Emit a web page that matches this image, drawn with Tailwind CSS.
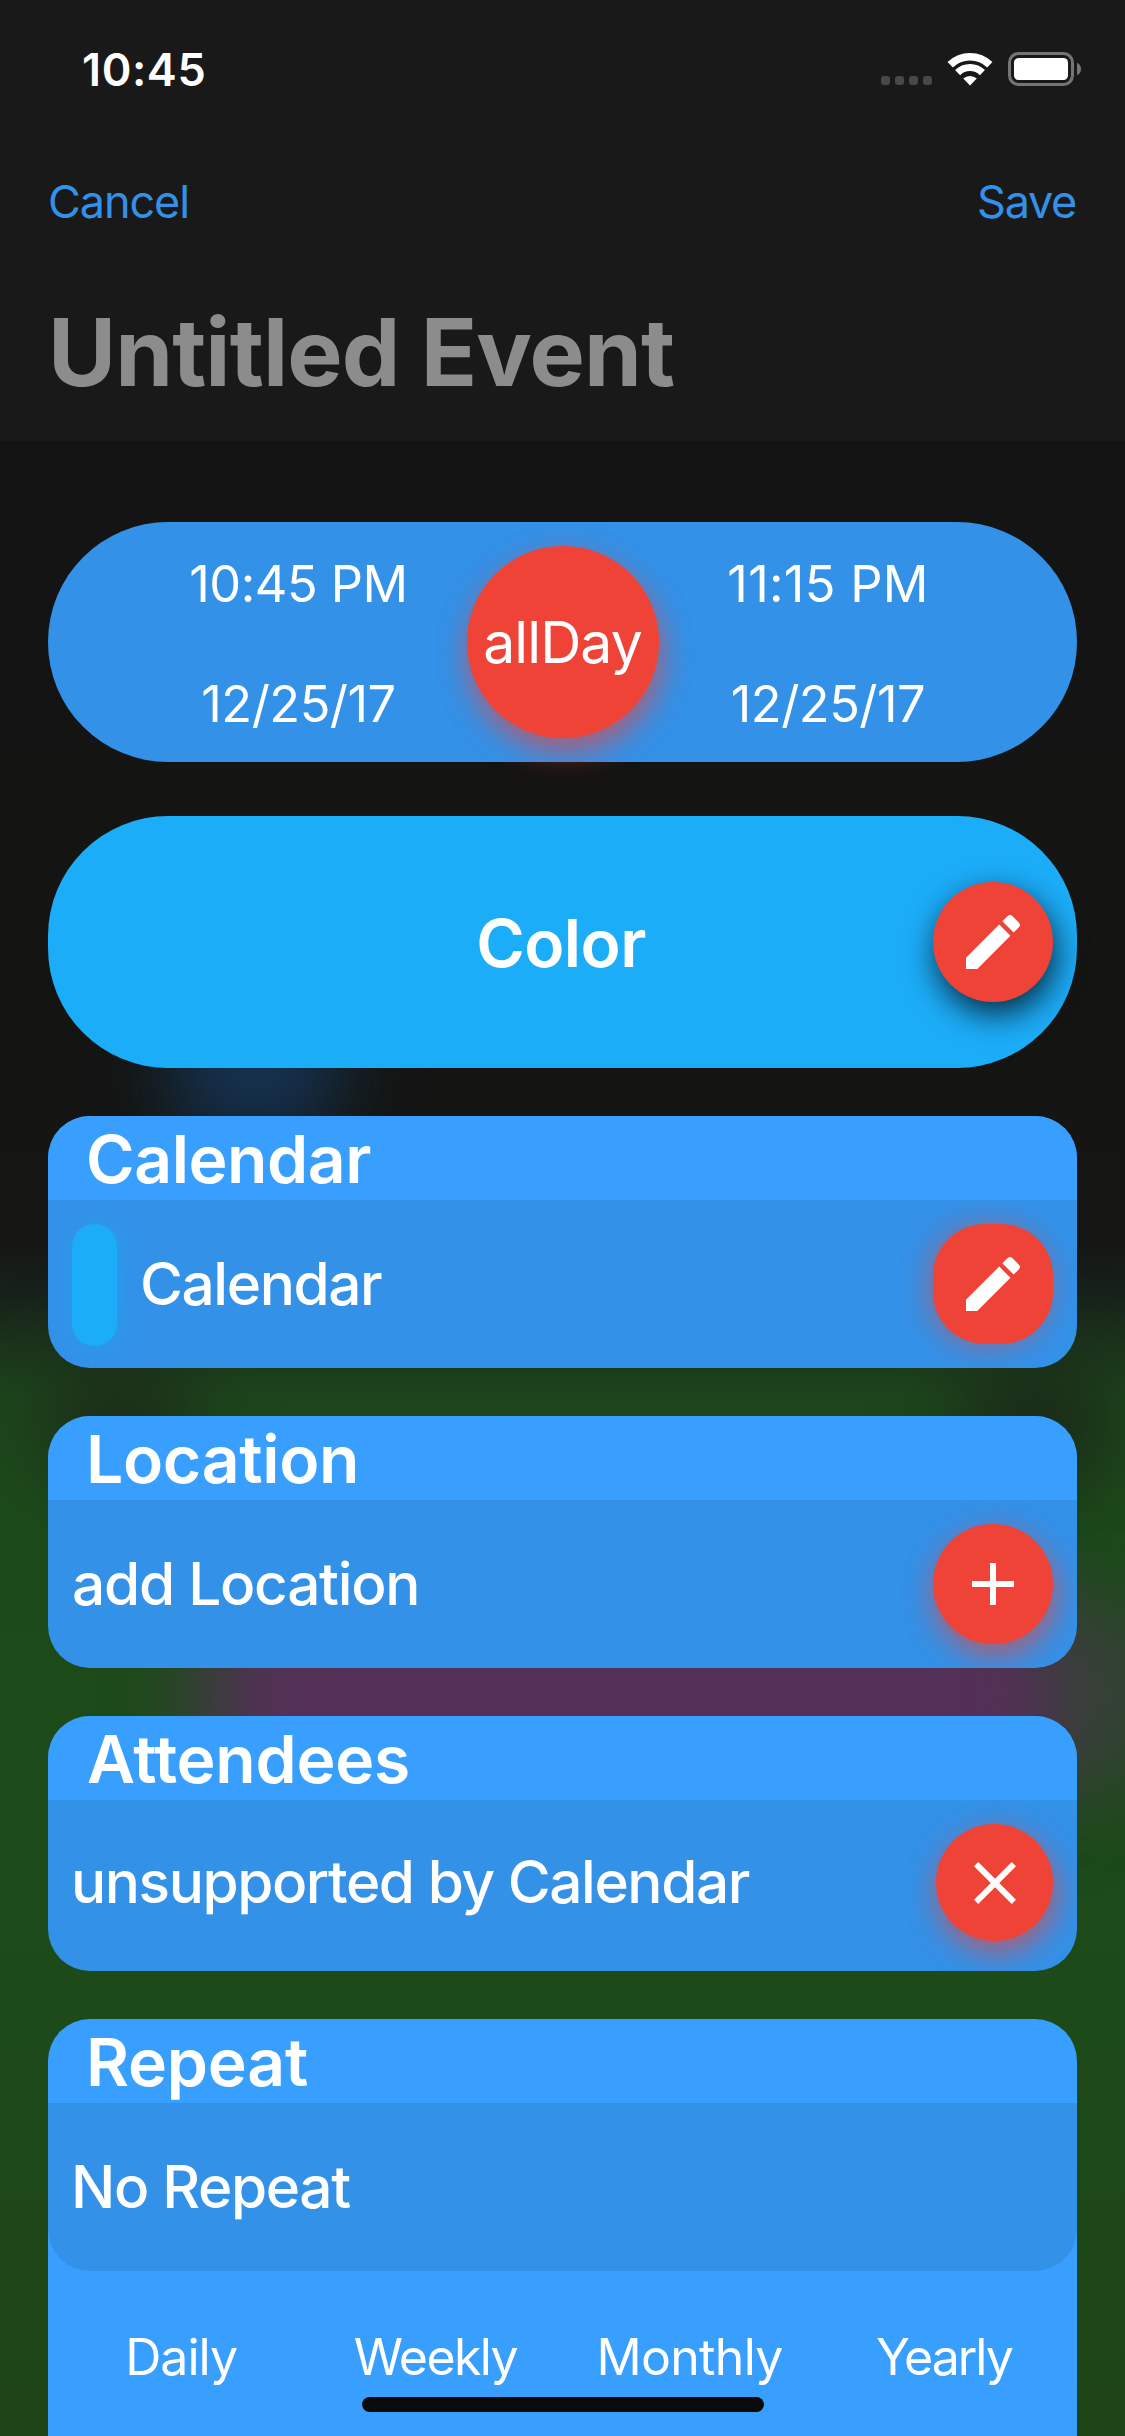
<!DOCTYPE html>
<html lang="en">
<head>
<meta charset="utf-8">
<title>Untitled Event</title>
<script src="https://cdn.jsdelivr.net/npm/@tailwindcss/browser@4"></script>
</head>
<body class="bg-[#141414]">
<div class="relative isolate w-[1125px] h-[2436px] overflow-hidden font-['Inter',sans-serif] text-white">

  <!-- Blurred wallpaper -->
  <div class="absolute inset-0 -z-10 overflow-hidden bg-[linear-gradient(to_bottom,#141414_0px,#141414_700px,#141513_1000px,#151614_1240px,#17221a_1295px,#1b341b_1345px,#1c451c_1395px,#1c4b1a_1530px,#1d4a19_2050px,#1e4415_2436px)]">
    <div class="absolute left-[165px] top-[1000px] w-[180px] h-[140px] rounded-full bg-[#15335299] blur-[40px]"></div>
    <div class="absolute left-[180px] top-[1000px] w-[150px] h-[120px] rounded-full bg-[#15375c]/70 blur-[35px]"></div>
    <div class="absolute left-[50px] top-[1350px] w-[140px] h-[140px] rounded-full bg-[#1c2a18] blur-[42px]"></div>
    <div class="absolute left-[960px] top-[1350px] w-[150px] h-[150px] rounded-full bg-[#1b2918] blur-[42px]"></div>
    <div class="absolute left-[205px] top-[1590px] w-[875px] h-[210px] rounded-[60px] bg-[#553059] blur-[45px]"></div>
    <div class="absolute left-[1060px] top-[1610px] w-[120px] h-[170px] rounded-[60px] bg-[#413e44]/60 blur-[42px]"></div>
  </div>

  <header class="h-[441px] bg-[#191919]">
    <div class="flex h-[138px] items-center justify-between pl-[82px] pr-[44px]">
      <span class="text-[45px] leading-none font-semibold tracking-[0.6px]">10:45</span>
      <div class="flex items-center">
        <div class="mt-[23px] mr-[15px] flex gap-[5px]">
          <i class="size-[9px] rounded-[3px] bg-[#484848]"></i>
          <i class="size-[9px] rounded-[3px] bg-[#484848]"></i>
          <i class="size-[9px] rounded-[3px] bg-[#484848]"></i>
          <i class="size-[9px] rounded-[3px] bg-[#484848]"></i>
        </div>
        <svg class="mr-[15px] h-[34px] w-[46px]" viewBox="0 0 46 34">
          <path d="M3.2 12.8A28.5 28.5 0 0 1 42.8 12.8" fill="none" stroke="#fff" stroke-width="7.6"/>
          <path d="M10.6 20.6A17.6 17.6 0 0 1 35.4 20.6" fill="none" stroke="#fff" stroke-width="7.2"/>
          <path d="M23 33.4L16.2 26.6A10 10 0 0 1 29.8 26.6Z" fill="#fff"/>
        </svg>
        <svg class="h-[34px] w-[73px]" viewBox="0 0 73 34">
          <rect x="1.5" y="1.5" width="63" height="31" rx="9" fill="none" stroke="#757575" stroke-width="3"/>
          <rect x="6" y="6" width="54" height="22" rx="4.5" fill="#fff"/>
          <path d="M69 10.7c5.4 2.2 5.4 10.4 0 12.6z" fill="#757575"/>
        </svg>
      </div>
    </div>
    <nav class="flex h-[126px] items-center justify-between pr-[49px] pl-[48px] text-[45px] leading-none text-[#3391e8]">
      <span class="tracking-[-1.1px]">Cancel</span>
      <span class="tracking-[-1.3px]">Save</span>
    </nav>
    <h1 class="flex h-[177px] items-center px-[48px] text-[93px] leading-none font-bold tracking-[-0.9px] text-[#8c8c8c]">Untitled Event</h1>
  </header>

  <main class="px-[48px] pt-[81px]">
    <section class="flex h-[240px] items-center justify-center rounded-[120px] bg-[#3391e8] text-[50.5px] leading-none">
      <div class="flex w-[336px] flex-col items-center">
        <span class="flex h-[120px] items-center pt-[4px] tracking-[-0.5px]">10:45 PM</span>
        <span class="flex h-[120px] items-center pt-[4px] tracking-[-0.5px]">12/25/17</span>
      </div>
      <div class="flex size-[192px] items-center justify-center rounded-full bg-[#ee4336] text-[57px] tracking-[-0.9px] shadow-[2px_12px_30px_rgba(238,67,54,0.7)]">allDay</div>
      <div class="flex w-[336px] flex-col items-center pl-[3px]">
        <span class="flex h-[120px] items-center pt-[4px] tracking-[0.3px]">11:15 PM</span>
        <span class="flex h-[120px] items-center pt-[4px] tracking-[-0.5px]">12/25/17</span>
      </div>
    </section>

    <section class="mt-[54px] grid h-[252px] grid-cols-[120px_1fr_120px] items-center rounded-[120px] bg-[#1cadf9] px-[24px]">
      <h2 class="col-start-2 pt-[2px] pr-[3px] text-center text-[66px] leading-none font-semibold tracking-[-0.55px]">Color</h2>
      <button class="flex size-[120px] items-center justify-center rounded-full bg-[#ee4336] shadow-[3px_12px_32px_rgba(0,0,0,0.75)]">
        <svg class="size-[72px]" viewBox="0 0 24 24" fill="#fff"><path d="M3 17.25V21h3.75L17.81 9.94l-3.75-3.75L3 17.25zM20.71 7.04c.39-.39.39-1.02 0-1.41l-2.34-2.34c-.39-.39-1.02-.39-1.41 0l-1.83 1.83 3.75 3.75 1.83-1.83z"/></svg>
      </button>
    </section>

    <section class="mt-[48px] overflow-hidden rounded-[42px] bg-[#3391e8]">
      <h2 class="flex h-[84px] items-center bg-[#389fff] pt-[2px] pl-[38px] text-[66px] leading-none font-semibold tracking-[-0.45px]">Calendar</h2>
      <div class="flex h-[168px] items-center px-[24px]">
        <div class="mt-[2px] h-[122px] w-[45px] rounded-full bg-[#1cadf9] shadow-[2px_2px_26px_rgba(28,173,249,0.5)]"></div>
        <span class="ml-[23px] flex-1 text-[58.5px] leading-none font-medium tracking-[-1.4px]">Calendar</span>
        <button class="flex size-[120px] items-center justify-center rounded-[52px] bg-[#ee4336] shadow-[-4px_2px_28px_rgba(238,67,54,0.5)]">
          <svg class="size-[72px]" viewBox="0 0 24 24" fill="#fff"><path d="M3 17.25V21h3.75L17.81 9.94l-3.75-3.75L3 17.25zM20.71 7.04c.39-.39.39-1.02 0-1.41l-2.34-2.34c-.39-.39-1.02-.39-1.41 0l-1.83 1.83 3.75 3.75 1.83-1.83z"/></svg>
        </button>
      </div>
    </section>

    <section class="mt-[48px] overflow-hidden rounded-[42px] bg-[#3391e8]">
      <h2 class="flex h-[84px] items-center bg-[#389fff] pt-[2px] pl-[38px] text-[66px] leading-none font-semibold tracking-[-0.32px]">Location</h2>
      <div class="flex h-[168px] items-center px-[24px]">
        <span class="flex-1 text-[58.5px] leading-none font-medium tracking-[-1.25px]">add Location</span>
        <button class="flex size-[120px] items-center justify-center rounded-full bg-[#ee4336] shadow-[2px_10px_30px_rgba(238,67,54,0.7)]">
          <svg class="size-[72px]" viewBox="0 0 24 24" fill="#fff"><path d="M19 13h-6v6h-2v-6H5v-2h6V5h2v6h6v2z"/></svg>
        </button>
      </div>
    </section>

    <section class="mt-[48px] overflow-hidden rounded-[42px] bg-[#3391e8]">
      <h2 class="flex h-[84px] items-center bg-[#389fff] pt-[2px] pl-[39px] text-[66px] leading-none font-semibold tracking-[-0.24px]">Attendees</h2>
      <div class="flex h-[171px] items-center px-[24px] pb-[6px]">
        <span class="-ml-px flex-1 text-[58.5px] leading-none font-medium tracking-[-1.42px]">unsupported by Calendar</span>
        <button class="flex size-[117px] items-center justify-center rounded-full bg-[#ee4336] shadow-[2px_10px_30px_rgba(238,67,54,0.7)]">
          <svg class="size-[72px]" viewBox="0 0 24 24" fill="#fff"><path d="M19 6.41L17.59 5 12 10.59 6.41 5 5 6.41 10.59 12 5 17.59 6.41 19 12 13.41 17.59 19 19 17.59 13.41 12z"/></svg>
        </button>
      </div>
    </section>

    <section class="mt-[48px] h-[460px] overflow-hidden rounded-t-[42px] bg-[#389fff]">
      <h2 class="flex h-[84px] items-center pt-[2px] pl-[38px] text-[66px] leading-none font-semibold tracking-[-0.2px]">Repeat</h2>
      <div class="flex h-[168px] items-center rounded-b-[42px] bg-[#3391e8] pr-[24px] pl-[23px] text-[58.5px] leading-none font-medium tracking-[-1.35px]">No Repeat</div>
      <div class="grid h-[172px] grid-cols-4 items-center px-[6px] text-center text-[50px] leading-none">
        <span class="tracking-[-0.95px]">Daily</span>
        <span class="tracking-[-1.6px]">Weekly</span>
        <span class="tracking-[-0.7px]">Monthly</span>
        <span class="tracking-[-2px]">Yearly</span>
      </div>
    </section>
  </main>

  <!-- Home indicator -->
  <div class="absolute top-[2397px] left-[362px] h-[15px] w-[402px] rounded-full bg-[#0b0b0b]"></div>
</div>
</body>
</html>
